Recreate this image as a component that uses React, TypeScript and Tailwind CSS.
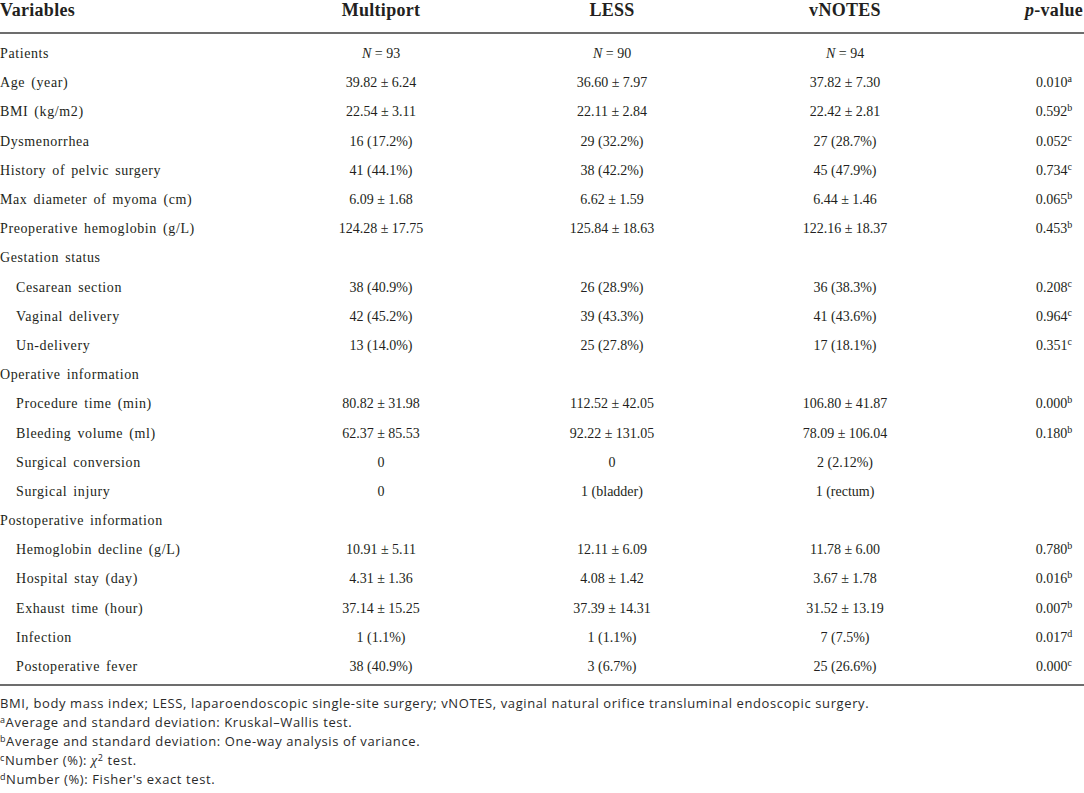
import React from "react";

type Row = {
  label: string;
  sub?: boolean;
  a?: React.ReactNode;
  b?: React.ReactNode;
  c?: React.ReactNode;
  p?: string;
  sup?: string;
};

const N = ({ n }: { n: number }) => (
  <span>
    <i>N</i> = {n}
  </span>
);

const rows: Row[] = [
  { label: "Patients", a: <N n={93} />, b: <N n={90} />, c: <N n={94} /> },
  { label: "Age (year)", a: "39.82 ± 6.24", b: "36.60 ± 7.97", c: "37.82 ± 7.30", p: "0.010", sup: "a" },
  { label: "BMI (kg/m2)", a: "22.54 ± 3.11", b: "22.11 ± 2.84", c: "22.42 ± 2.81", p: "0.592", sup: "b" },
  { label: "Dysmenorrhea", a: "16 (17.2%)", b: "29 (32.2%)", c: "27 (28.7%)", p: "0.052", sup: "c" },
  { label: "History of pelvic surgery", a: "41 (44.1%)", b: "38 (42.2%)", c: "45 (47.9%)", p: "0.734", sup: "c" },
  { label: "Max diameter of myoma (cm)", a: "6.09 ± 1.68", b: "6.62 ± 1.59", c: "6.44 ± 1.46", p: "0.065", sup: "b" },
  { label: "Preoperative hemoglobin (g/L)", a: "124.28 ± 17.75", b: "125.84 ± 18.63", c: "122.16 ± 18.37", p: "0.453", sup: "b" },
  { label: "Gestation status" },
  { label: "Cesarean section", sub: true, a: "38 (40.9%)", b: "26 (28.9%)", c: "36 (38.3%)", p: "0.208", sup: "c" },
  { label: "Vaginal delivery", sub: true, a: "42 (45.2%)", b: "39 (43.3%)", c: "41 (43.6%)", p: "0.964", sup: "c" },
  { label: "Un-delivery", sub: true, a: "13 (14.0%)", b: "25 (27.8%)", c: "17 (18.1%)", p: "0.351", sup: "c" },
  { label: "Operative information" },
  { label: "Procedure time (min)", sub: true, a: "80.82 ± 31.98", b: "112.52 ± 42.05", c: "106.80 ± 41.87", p: "0.000", sup: "b" },
  { label: "Bleeding volume (ml)", sub: true, a: "62.37 ± 85.53", b: "92.22 ± 131.05", c: "78.09 ± 106.04", p: "0.180", sup: "b" },
  { label: "Surgical conversion", sub: true, a: "0", b: "0", c: "2 (2.12%)" },
  { label: "Surgical injury", sub: true, a: "0", b: "1 (bladder)", c: "1 (rectum)" },
  { label: "Postoperative information" },
  { label: "Hemoglobin decline (g/L)", sub: true, a: "10.91 ± 5.11", b: "12.11 ± 6.09", c: "11.78 ± 6.00", p: "0.780", sup: "b" },
  { label: "Hospital stay (day)", sub: true, a: "4.31 ± 1.36", b: "4.08 ± 1.42", c: "3.67 ± 1.78", p: "0.016", sup: "b" },
  { label: "Exhaust time (hour)", sub: true, a: "37.14 ± 15.25", b: "37.39 ± 14.31", c: "31.52 ± 13.19", p: "0.007", sup: "b" },
  { label: "Infection", sub: true, a: "1 (1.1%)", b: "1 (1.1%)", c: "7 (7.5%)", p: "0.017", sup: "d" },
  { label: "Postoperative fever", sub: true, a: "38 (40.9%)", b: "3 (6.7%)", c: "25 (26.6%)", p: "0.000", sup: "c" },
];

// label | Multiport | LESS | vNOTES | p-value
const grid = "grid grid-cols-[265px_232px_230px_236px_1fr] items-center";
const serif = { fontFamily: '"Liberation Serif", serif' };

export default function App() {
  return (
    <div className="w-[1084px] h-[793px] bg-white text-[#231f20] overflow-hidden">
      {/* header */}
      <div
        className={`${grid} h-[34px] items-start font-bold text-[18px] leading-[20px] tracking-[0.3px] border-b-2 border-[#6d6d6d]`}
        style={serif}
      >
        <div>Variables</div>
        <div className="text-center">Multiport</div>
        <div className="text-center">LESS</div>
        <div className="text-center">vNOTES</div>
        <div className="justify-self-end w-[60px] text-center whitespace-nowrap">
          <i>p</i>-value
        </div>
      </div>

      {/* body */}
      <div className="pt-[5px] pb-[3px] border-b-2 border-[#6d6d6d] text-[14px]" style={serif}>
        {rows.map((r, i) => (
          <div key={i} className={`${grid} h-[29.2px]`}>
            <div className={`tracking-[0.6px] [word-spacing:2px] ${r.sub ? "pl-[16px]" : ""}`}>{r.label}</div>
            <div className="text-center">{r.a}</div>
            <div className="text-center">{r.b}</div>
            <div className="text-center">{r.c}</div>
            <div className="justify-self-end w-[60px] text-center whitespace-nowrap">
              {r.p}
              {r.sup && <sup className="text-[10px]">{r.sup}</sup>}
            </div>
          </div>
        ))}
      </div>

      {/* footnotes */}
      <div
        className="pt-[8px] text-[13px] leading-[19px] tracking-[0.6px] text-[#2a2a2a]"
        style={{ fontFamily: '"Open Sans", sans-serif' }}
      >
        <div>
          BMI, body mass index; LESS, laparoendoscopic single-site surgery; vNOTES, vaginal natural orifice
          transluminal endoscopic surgery.
        </div>
        <div>
          <sup className="text-[9px]">a</sup>Average and standard deviation: Kruskal–Wallis test.
        </div>
        <div>
          <sup className="text-[9px]">b</sup>Average and standard deviation: One-way analysis of variance.
        </div>
        <div>
          <sup className="text-[9px]">c</sup>Number (%):{" "}
          <span style={serif} className="italic text-[14px]">
            χ
          </span>
          <sup className="text-[9px]">2</sup> test.
        </div>
        <div>
          <sup className="text-[9px]">d</sup>Number (%): Fisher's exact test.
        </div>
      </div>
    </div>
  );
}
